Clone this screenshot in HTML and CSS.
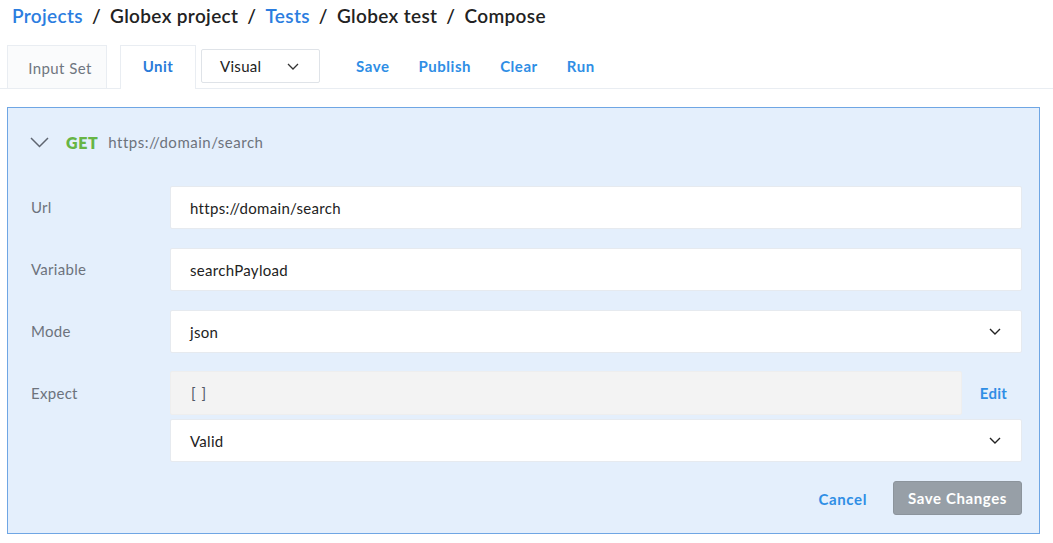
FILE: index.html
```html
<!DOCTYPE html>
<html>
<head>
<meta charset="utf-8">
<link rel="stylesheet" href="styles.css">
</head>
<body>
<nav class="crumbs">
  <a class="crumb-link">Projects</a><span class="sep">/</span><span class="crumb">Globex project</span><span class="sep">/</span><a class="crumb-link">Tests</a><span class="sep">/</span><span class="crumb">Globex test</span><span class="sep">/</span><span class="crumb">Compose</span>
</nav>
<div class="tabbar">
  <div class="tab">Input Set</div>
  <div class="tab tab-active">Unit</div>
  <div class="select select-visual">
    <span>Visual</span>
    <svg class="chev" width="12" height="7" viewBox="0 0 12 7"><path d="M1 1l5 5 5-5" fill="none" stroke="#333" stroke-width="1.3"/></svg>
  </div>
  <div class="actions">
    <a class="action">Save</a>
    <a class="action">Publish</a>
    <a class="action">Clear</a>
    <a class="action">Run</a>
  </div>
</div>
<section class="panel">
  <div class="panel-head">
    <svg class="toggle" width="19" height="11" viewBox="0 0 19 11"><path d="M1 1l8.5 8.5L18 1" fill="none" stroke="#5f6570" stroke-width="1.5"/></svg>
    <span class="method">GET</span>
    <span class="head-url">https://domain/search</span>
  </div>
  <div class="form">
    <div class="label">Url</div>
    <div class="field">https://domain/search</div>
    <div class="label">Variable</div>
    <div class="field">searchPayload</div>
    <div class="label">Mode</div>
    <div class="field field-select"><span>json</span><svg class="chev" width="12" height="7" viewBox="0 0 12 7"><path d="M1 1l5 5 5-5" fill="none" stroke="#222" stroke-width="1.4"/></svg></div>
    <div class="label label-top">Expect</div>
    <div class="expect">
      <div class="expect-line">
        <div class="field field-code">[ ]</div>
        <a class="edit">Edit</a>
      </div>
      <div class="field field-select"><span>Valid</span><svg class="chev" width="12" height="7" viewBox="0 0 12 7"><path d="M1 1l5 5 5-5" fill="none" stroke="#222" stroke-width="1.4"/></svg></div>
    </div>
  </div>
  <div class="footer">
    <a class="cancel">Cancel</a>
    <button class="save-btn">Save Changes</button>
  </div>
</section>
</body>
</html>
```
FILE: styles.css
```css
* { box-sizing: border-box; }
body {
  margin: 0;
  font-family: Lato, "Open Sans", "Liberation Sans", sans-serif;
  color: #222;
  background: #fff;
  width: 1053px;
  letter-spacing: 0.3px;
}
a { cursor: pointer; }
.crumbs {
  padding: 4px 0 0 12px;
  height: 45px;
  font-size: 19px;
  line-height: 24px;
  font-weight: 600;
  color: #222;
  letter-spacing: 0.35px;
}
.crumb-link { color: #2b7ddf; }
.sep { margin: 0 9px; }
.tabbar {
  display: flex;
  align-items: flex-start;
  height: 44px;
  padding-left: 7px;
  border-bottom: 1px solid #e9edf2;
}
.tab {
  height: 43px;
  border: 1px solid #e9edf2;
  border-bottom: none;
  background: #fafbfc;
  color: #6f7680;
  font-size: 15px;
  display: flex;
  align-items: center;
  justify-content: center;
  padding: 2px 0 0 6px;
  letter-spacing: 0.4px;
}
.tab:first-child { width: 100px; }
.tab-active {
  width: 76px;
  margin-left: 13px;
  height: 44px;
  background: #fff;
  color: #2a7bd9;
  font-weight: 700;
  padding: 0 0 4px 0;
  letter-spacing: 0.5px;
}
.select {
  display: flex;
  align-items: center;
  justify-content: space-between;
}
.select-visual {
  margin: 4px 0 0 5px;
  width: 119px;
  height: 34px;
  border: 1px solid #dfe3e8;
  border-radius: 2px;
  padding: 0 20px 0 18px;
  font-size: 15px;
  color: #222;
}
.actions {
  display: flex;
  gap: 29px;
  margin-left: 36px;
  height: 44px;
  align-items: center;
}
.action {
  color: #2f8ee5;
  font-size: 15px;
  font-weight: 700;
  padding-bottom: 3px;
  letter-spacing: 0.55px;
}
.panel {
  margin: 18px 0 0 7px;
  width: 1033px;
  height: 427px;
  background: #e4effc;
  border: 1px solid #6fa6e4;
  padding: 22px 17px 0 22px;
}
.panel-head {
  display: flex;
  align-items: center;
  height: 24px;
}
.toggle { margin-left: 0; margin-top: 1px; }
.method {
  color: #67b545;
  font-weight: 800;
  font-size: 16px;
  margin-left: 17px;
  letter-spacing: 0.6px;
}
.head-url {
  color: #6d737c;
  font-size: 15px;
  margin-left: 10px;
  letter-spacing: 0.5px;
}
.form {
  margin-top: 32px;
  display: grid;
  grid-template-columns: 140px 1fr;
  row-gap: 19px;
}
.label {
  font-size: 15px;
  color: #6d737c;
  display: flex;
  align-items: center;
  height: 43px;
  padding: 0 0 2px 1px;
}
.field {
  height: 43px;
  background: #fff;
  border: 1px solid #e6eaef;
  border-radius: 2px;
  font-size: 15px;
  color: #222;
  display: flex;
  align-items: center;
  padding: 0 19px;
}
.field-select { justify-content: space-between; padding-right: 20px; }
.expect {
  display: flex;
  flex-direction: column;
  gap: 4px;
  margin-top: -1px;
}
.expect-line {
  display: flex;
  align-items: center;
}
.field-code {
  flex: 1;
  height: 44px;
  background: #f3f3f3;
  border-color: #eeeeee;
  color: #505866;
  padding-left: 20px;
  letter-spacing: 1px;
}
.edit {
  width: 60px;
  text-align: center;
  color: #2f8ee5;
  font-size: 15px;
  font-weight: 700;
  padding-left: 3px;
}
.footer {
  display: flex;
  justify-content: flex-end;
  align-items: center;
  margin-top: 19px;
  gap: 26px;
}
.cancel {
  color: #2f8ee5;
  font-size: 15px;
  font-weight: 700;
  letter-spacing: 0.6px;
  padding-top: 2px;
}
.save-btn {
  width: 129px;
  height: 34px;
  background: #979fa7;
  border: 1px solid #8c949c;
  border-radius: 3px;
  color: #fff;
  font-family: inherit;
  font-size: 15px;
  font-weight: 700;
  padding: 0;
  letter-spacing: 0.6px;
}
```
